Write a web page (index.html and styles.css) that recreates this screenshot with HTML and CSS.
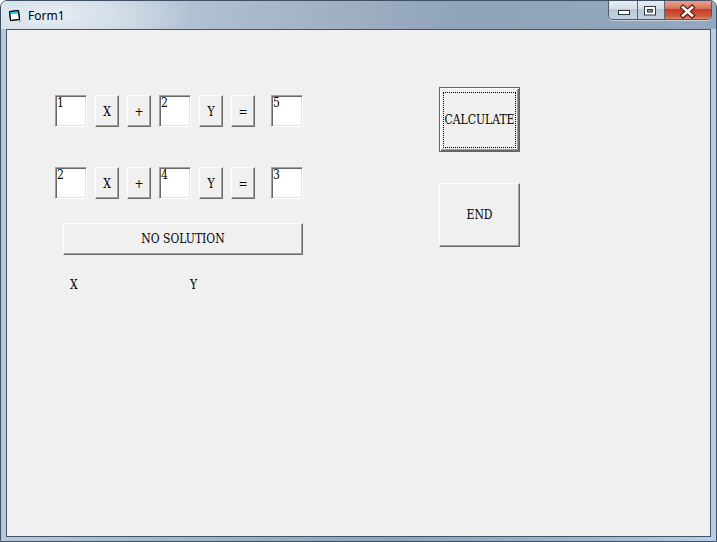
FILE: index.html
```html
<!DOCTYPE html>
<html>
<head>
<meta charset="utf-8">
<title>Form1</title>
<link rel="stylesheet" href="styles.css">
</head>
<body>
<div class="window">
  <div class="titlebar">
    <svg class="app-icon" width="14" height="14" viewBox="0 0 14 14">
      <path d="M1.5 2.5 L10.5 1.5 L11.5 10.5 L2.5 11.5 Z" fill="#fff" stroke="#000"/>
      <path d="M1.8 2.5 L10.5 1.6 L10.8 4.4 L2.1 5.3 Z" fill="#19c8e6"/>
      <path d="M1.5 2.5 L10.5 1.5 L11.5 10.5 L2.5 11.5 Z" fill="none" stroke="#000"/>
      <path d="M11 11 L13.5 12 L11.5 13.5 Z" fill="#8a8f96"/>
    </svg>
    <span class="title">Form1</span>
    <div class="caption-buttons">
      <div class="cap cap-min">
        <svg width="28" height="19" viewBox="0 0 28 19"><rect x="9.5" y="10.5" width="11" height="4" fill="#fff" stroke="#2e3a48"/></svg>
      </div>
      <div class="cap cap-max">
        <svg width="26" height="19" viewBox="0 0 26 19"><rect x="6.5" y="6.5" width="11" height="8.5" fill="#fff" stroke="#2e3a48"/><rect x="9.5" y="9.5" width="5" height="2.5" fill="#8d99a6" stroke="#2e3a48"/></svg>
      </div>
      <div class="cap cap-close">
        <svg width="46" height="19" viewBox="0 0 46 19"><path d="M18 7.5 L27 15.5 M27 7.5 L18 15.5" stroke="#5a1a10" stroke-width="5" stroke-linecap="square"/><path d="M18 7.5 L27 15.5 M27 7.5 L18 15.5" stroke="#fff" stroke-width="2.6" stroke-linecap="square"/></svg>
      </div>
    </div>
  </div>
  <div class="client">
    <div class="left-col">
      <div class="eq-row">
        <div class="tb">1</div>
        <button class="btn small">X</button>
        <button class="btn small">+</button>
        <div class="tb">2</div>
        <button class="btn small">Y</button>
        <button class="btn small">=</button>
        <div class="tb result">5</div>
      </div>
      <div class="eq-row">
        <div class="tb">2</div>
        <button class="btn small">X</button>
        <button class="btn small">+</button>
        <div class="tb">4</div>
        <button class="btn small">Y</button>
        <button class="btn small">=</button>
        <div class="tb result">3</div>
      </div>
      <button class="btn wide">NO SOLUTION</button>
      <div class="labels"><span>X</span><span>Y</span></div>
    </div>
    <div class="right-col">
      <button class="btn big default">CALCULATE</button>
      <button class="btn big end">END</button>
    </div>
  </div>
</div>
</body>
</html>
```
FILE: styles.css
```css
html, body {
  margin: 0;
  padding: 0;
  background: #ffffff;
}
body {
  width: 717px;
  height: 542px;
  overflow: hidden;
}
.window {
  width: 717px;
  height: 542px;
  box-sizing: border-box;
  border: 1px solid #3f5064;
  border-radius: 7px 7px 0 0;
  background: linear-gradient(to right, #b7c8d9 0%, #a3b6ca 25%, #8ea4bb 55%, #9cb4cd 80%, #b5d0ea 100%);
  display: flex;
  flex-direction: column;
  overflow: hidden;
}
.titlebar {
  height: 28px;
  display: flex;
  align-items: flex-start;
  background: radial-gradient(ellipse 140px 40px at 50px 14px, rgba(232,238,244,0.95) 0%, rgba(220,229,238,0.7) 50%, rgba(200,212,225,0) 100%),
              linear-gradient(to right, #cdd9e5 0%, #a9bacc 35%, #8fa3b9 65%, #93a8be 100%);
}
.app-icon {
  margin: 8px 0 0 7px;
  flex: none;
}
.title {
  font-family: "Noto Sans", "Open Sans", sans-serif;
  font-size: 12px;
  color: #000;
  margin: 6px 0 0 6px;
  line-height: 17px;
}
.caption-buttons {
  margin-left: auto;
  margin-right: 4px;
  margin-top: -1px;
  display: flex;
  border: 1px solid #4b5d72;
  border-top: none;
  border-radius: 0 0 5px 5px;
  overflow: hidden;
  height: 19px;
  box-shadow: 0 1px 0 rgba(255,255,255,0.5);
}
.cap {
  height: 19px;
  display: flex;
}
.cap-min { width: 28px; border-right: 1px solid #56677b; }
.cap-max { width: 26px; border-right: 1px solid #56677b; }
.cap-close { width: 46px; }
.cap-min, .cap-max {
  background: linear-gradient(to bottom, #e9eef3 0%, #d6dee7 45%, #bac7d4 50%, #c3d0dd 100%);
}
.cap-close {
  background: linear-gradient(to bottom, #e9a898 0%, #d8735c 45%, #c43e24 50%, #cf5a3f 85%, #e08a6c 100%);
}
.client {
  margin: 0 5px;
  height: 508px;
  box-sizing: border-box;
  border: 1px solid #465364;
  background: #f0f0f0;
  display: flex;
  align-items: flex-start;
  font-family: "DejaVu Serif", "Liberation Serif", serif;
  font-stretch: condensed;
  font-size: 12px;
  color: #000;
}
.left-col {
  margin: 65px 0 0 48px;
  width: 249px;
  display: flex;
  flex-direction: column;
}
.eq-row {
  display: flex;
  gap: 8px;
  height: 32px;
}
.eq-row + .eq-row {
  margin-top: 40px;
}
.tb {
  width: 32px;
  height: 32px;
  box-sizing: border-box;
  background: #fff;
  border: 1px solid;
  border-color: #a0a0a0 #ffffff #ffffff #a0a0a0;
  box-shadow: inset 1px 1px 0 #696969, inset -1px -1px 0 #e3e3e3;
  padding: 1px 0 0 1px;
  line-height: 13px;
}
.tb.result {
  margin-left: 8px;
}
.btn {
  font-family: "DejaVu Serif", "Liberation Serif", serif;
  font-stretch: condensed;
  font-size: 12px;
  color: #000;
  background: #f0f0f0;
  box-sizing: border-box;
  border: 1px solid;
  border-color: #ffffff #696969 #696969 #ffffff;
  box-shadow: inset -1px -1px 0 #a0a0a0;
  padding: 0;
  margin: 0;
  border-radius: 0;
  position: relative;
  display: flex;
  align-items: center;
  justify-content: center;
}
.btn.small {
  width: 24px;
  height: 32px;
  padding-top: 1px;
}
.btn.wide {
  width: 240px;
  height: 32px;
  margin: 24px 0 0 8px;
  padding-bottom: 1px;
}
.labels {
  display: grid;
  grid-template-columns: 120px auto;
  margin: 23px 0 0 15px;
  line-height: 15px;
}
.right-col {
  margin: 57px 0 0 135px;
  display: flex;
  flex-direction: column;
  gap: 31px;
}
.btn.big {
  width: 81px;
  height: 65px;
}
.btn.big.end {
  height: 64px;
}
.btn.default {
  border: 1px solid #646464;
  box-shadow: inset 1px 1px 0 #ffffff, inset -1px -1px 0 #696969, inset -2px -2px 0 #a0a0a0;
}
.btn.default::after {
  content: "";
  position: absolute;
  left: 3px;
  top: 4px;
  right: 3px;
  bottom: 3px;
  border: 1px dotted #000;
}
```
